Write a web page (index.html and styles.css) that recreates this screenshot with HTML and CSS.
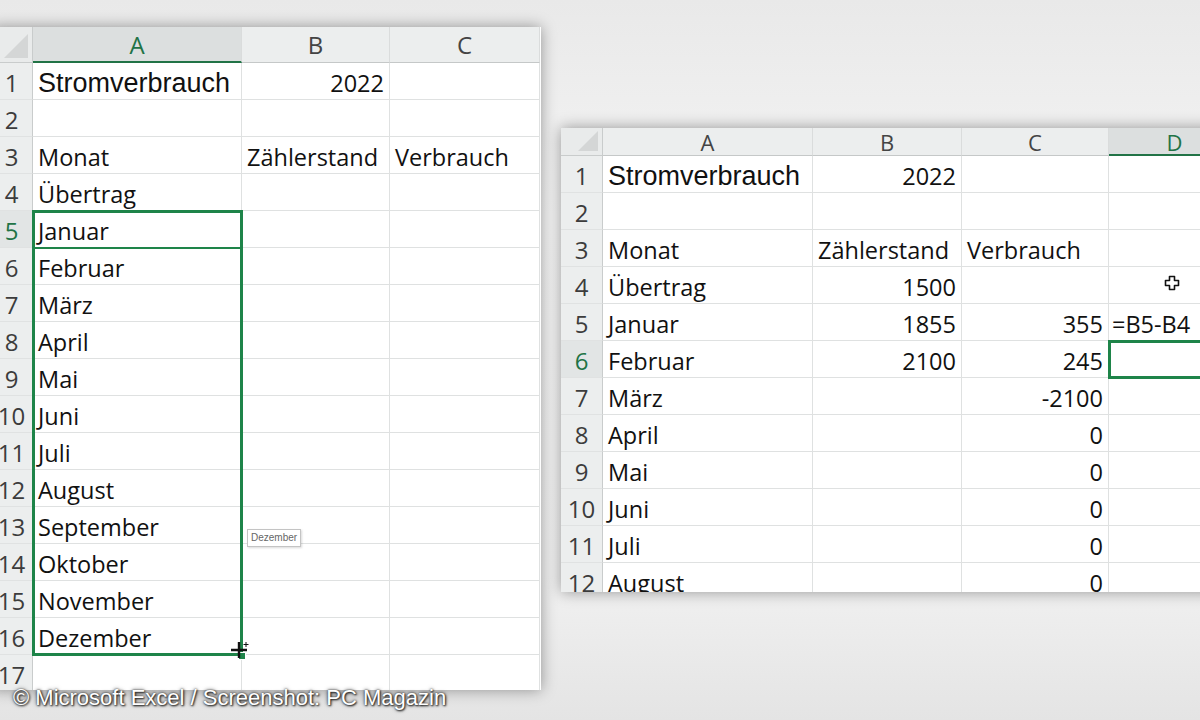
FILE: index.html
```html
<!DOCTYPE html>
<html lang="de">
<head>
<meta charset="utf-8">
<title>Stromverbrauch</title>
<link rel="stylesheet" href="styles.css">
</head>
<body>
<div class="stage">

  <div class="sheet sheet-left">
    <div class="grid grid-left">
      <div class="corner"><span class="tri"></span></div>
      <div class="ch ch-sel">A</div>
      <div class="ch">B</div>
      <div class="ch">C</div>

      <div class="rh">1</div><div class="c ar">Stromverbrauch</div><div class="c n">2022</div><div class="c"></div>
      <div class="rh">2</div><div class="c"></div><div class="c"></div><div class="c"></div>
      <div class="rh">3</div><div class="c">Monat</div><div class="c">Zählerstand</div><div class="c">Verbrauch</div>
      <div class="rh">4</div><div class="c">Übertrag</div><div class="c"></div><div class="c"></div>
      <div class="rh rh-sel">5</div><div class="c">Januar</div><div class="c"></div><div class="c"></div>
      <div class="rh">6</div><div class="c">Februar</div><div class="c"></div><div class="c"></div>
      <div class="rh">7</div><div class="c">März</div><div class="c"></div><div class="c"></div>
      <div class="rh">8</div><div class="c">April</div><div class="c"></div><div class="c"></div>
      <div class="rh">9</div><div class="c">Mai</div><div class="c"></div><div class="c"></div>
      <div class="rh">10</div><div class="c">Juni</div><div class="c"></div><div class="c"></div>
      <div class="rh">11</div><div class="c">Juli</div><div class="c"></div><div class="c"></div>
      <div class="rh">12</div><div class="c">August</div><div class="c"></div><div class="c"></div>
      <div class="rh">13</div><div class="c">September</div><div class="c"></div><div class="c"></div>
      <div class="rh">14</div><div class="c">Oktober</div><div class="c"></div><div class="c"></div>
      <div class="rh">15</div><div class="c">November</div><div class="c"></div><div class="c"></div>
      <div class="rh">16</div><div class="c">Dezember</div><div class="c"></div><div class="c"></div>
      <div class="rh">17</div><div class="c"></div><div class="c"></div><div class="c"></div>
    </div>
    <div class="sel-range"></div>
    <div class="sel-active"></div>
    <div class="fill-handle"></div>
    <svg class="cross-cursor" width="22" height="22" viewBox="0 0 22 22">
      <path d="M9 2 V18 M1 10 H17" stroke="#111" stroke-width="2.4" fill="none"/>
      <path d="M16 2 V7 M13.5 4.5 H18.5" stroke="#111" stroke-width="1" fill="none"/>
    </svg>
    <div class="tooltip">Dezember</div>
  </div>

  <div class="sheet sheet-right">
    <div class="grid grid-right">
      <div class="corner corner-r"><span class="tri"></span></div>
      <div class="ch ch-r">A</div>
      <div class="ch ch-r">B</div>
      <div class="ch ch-r">C</div>
      <div class="ch ch-r ch-sel">D</div>

      <div class="rh">1</div><div class="c ar">Stromverbrauch</div><div class="c n">2022</div><div class="c"></div><div class="c"></div>
      <div class="rh">2</div><div class="c"></div><div class="c"></div><div class="c"></div><div class="c"></div>
      <div class="rh">3</div><div class="c">Monat</div><div class="c">Zählerstand</div><div class="c">Verbrauch</div><div class="c"></div>
      <div class="rh">4</div><div class="c">Übertrag</div><div class="c n">1500</div><div class="c"></div><div class="c"></div>
      <div class="rh">5</div><div class="c">Januar</div><div class="c n">1855</div><div class="c n">355</div><div class="c f">=B5-B4</div>
      <div class="rh rh-sel">6</div><div class="c">Februar</div><div class="c n">2100</div><div class="c n">245</div><div class="c"></div>
      <div class="rh">7</div><div class="c">März</div><div class="c"></div><div class="c n">-2100</div><div class="c"></div>
      <div class="rh">8</div><div class="c">April</div><div class="c"></div><div class="c n">0</div><div class="c"></div>
      <div class="rh">9</div><div class="c">Mai</div><div class="c"></div><div class="c n">0</div><div class="c"></div>
      <div class="rh">10</div><div class="c">Juni</div><div class="c"></div><div class="c n">0</div><div class="c"></div>
      <div class="rh">11</div><div class="c">Juli</div><div class="c"></div><div class="c n">0</div><div class="c"></div>
      <div class="rh">12</div><div class="c">August</div><div class="c"></div><div class="c n">0</div><div class="c"></div>
    </div>
    <div class="sel-cell"></div>
    <svg class="plus-cursor" width="16" height="16" viewBox="0 0 16 16">
      <path d="M5.5 1.5 H10.5 V5.5 H14.5 V10.5 H10.5 V14.5 H5.5 V10.5 H1.5 V5.5 H5.5 Z" fill="#fff" stroke="#111" stroke-width="1.6" stroke-linejoin="round"/>
    </svg>
  </div>

  <div class="credit">© Microsoft Excel / Screenshot: PC Magazin</div>
</div>
</body>
</html>
```

FILE: styles.css
```css
html, body {
  margin: 0;
  padding: 0;
}

body {
  width: 1200px;
  height: 720px;
  overflow: hidden;
  background: #efefef;
  font-family: "Open Sans", "Liberation Sans", sans-serif;
}

.stage {
  position: relative;
  width: 1200px;
  height: 720px;
  overflow: hidden;
  background: linear-gradient(#e9e9e9, #f4f4f4 30%, #f1f1f1 80%, #e4e4e4);
}

.sheet {
  position: absolute;
  background: #fff;
  overflow: hidden;
  box-shadow: 0 0 14px rgba(0, 0, 0, 0.38);
}

.sheet-left {
  left: -9px;
  top: 27px;
  width: 550px;
  height: 663px;
}

.sheet-right {
  left: 561px;
  top: 128px;
  width: 680px;
  height: 464px;
}

.grid {
  display: grid;
}

.grid-left {
  grid-template-columns: 42px 209px 148px 150px;
  grid-template-rows: 36px repeat(17, 37px);
}

.grid-right {
  grid-template-columns: 42px 210px 149px 147px 132px;
  grid-template-rows: 28px repeat(12, 37px);
}

.corner {
  position: relative;
  background: #e9ebeb;
  border-right: 1px solid #c9cccc;
  border-bottom: 1px solid #c9cccc;
}

.tri {
  position: absolute;
  right: 4px;
  bottom: 4px;
  width: 0;
  height: 0;
  border-left: 24px solid transparent;
  border-bottom: 24px solid #d4d6d6;
}

.corner-r .tri {
  border-left-width: 20px;
  border-bottom-width: 20px;
}

.ch {
  background: #eceeee;
  border-right: 1px solid #dadcdc;
  border-bottom: 1px solid #c5c8c8;
  color: #444;
  font-size: 24px;
  line-height: 36px;
  text-align: center;
}

.ch-r {
  font-size: 22px;
  line-height: 28px;
}

.ch-sel {
  background: #dcdfdf;
  color: #217346;
  border-bottom: 2px solid #217346;
}

.rh {
  background: #eceeee;
  border-right: 1px solid #c9cccc;
  border-bottom: 1px solid #e0e2e2;
  color: #3c3c3c;
  font-size: 24px;
  line-height: 39px;
  text-align: center;
}

.rh-sel {
  color: #217346;
  background: #e2e5e5;
}

.c {
  border-right: 1px solid #dfe1e1;
  border-bottom: 1px solid #dfe1e1;
  color: #111;
  font-size: 23.5px;
  line-height: 40px;
  padding: 0 5px;
  white-space: nowrap;
  overflow: visible;
  min-width: 0;
}

.c.ar {
  font-family: "Liberation Sans", Arial, sans-serif;
  font-size: 27px;
}

.c.n {
  text-align: right;
}

.c.f {
  padding-left: 3px;
}

.sel-range {
  position: absolute;
  left: 41px;
  top: 183px;
  width: 205px;
  height: 440px;
  border: 3px solid #1e8449;
}

.sel-active {
  position: absolute;
  left: 42px;
  top: 220px;
  width: 209px;
  height: 2px;
  background: #1e8449;
}

.fill-handle {
  position: absolute;
  left: 247px;
  top: 625px;
  width: 6px;
  height: 6px;
  background: #1e8449;
  border: 1px solid #fff;
}

.cross-cursor {
  position: absolute;
  left: 239px;
  top: 613px;
}

.tooltip {
  position: absolute;
  left: 256px;
  top: 502px;
  padding: 0 3px;
  height: 16px;
  line-height: 16px;
  font-family: "Liberation Sans", Arial, sans-serif;
  font-size: 10px;
  color: #666;
  background: #fff;
  border: 1px solid #c4c4c4;
  box-shadow: 1px 1px 2px rgba(0, 0, 0, 0.15);
}

.sel-cell {
  position: absolute;
  left: 547px;
  top: 212px;
  width: 120px;
  height: 33px;
  border: 3px solid #1e8449;
}

.plus-cursor {
  position: absolute;
  left: 603px;
  top: 147px;
}

.credit {
  position: absolute;
  left: 13px;
  top: 685px;
  font-family: "Liberation Sans", Arial, sans-serif;
  font-size: 22px;
  color: #fff;
  text-shadow: 0 0 2px #333, 1px 1px 2px #222, 0 0 4px rgba(0, 0, 0, 0.6);
  white-space: nowrap;
}
```
